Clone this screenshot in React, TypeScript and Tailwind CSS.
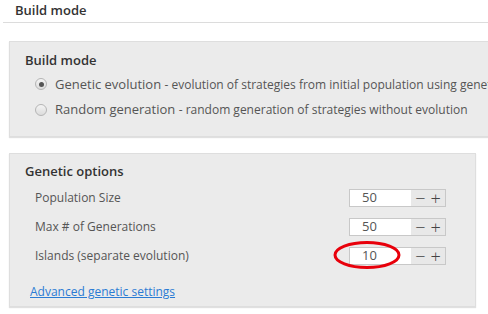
import React from 'react';

const font = { fontFamily: '"Open Sans", "Noto Sans", sans-serif' };

const Stepper = ({ value, circled }: { value: string; circled?: boolean }) => (
  <div className="relative flex h-[18px] w-[97px] border border-[#c8c8c8] bg-[#e8e8e8]">
    <div className="flex w-[61px] items-center bg-white pl-[12px] text-[13px] text-[#555]">{value}</div>
    <div className="flex flex-1 items-center justify-center gap-[5px] text-[18px] font-light leading-none text-[#444]">
      <span>−</span>
      <span>+</span>
    </div>
    {circled && (
      <svg className="pointer-events-none absolute left-[-17px] top-[-9px]" width="70" height="32" viewBox="0 0 70 32">
        <ellipse cx="34" cy="16" rx="32" ry="12.5" fill="none" stroke="#e8000b" strokeWidth="3" />
      </svg>
    )}
  </div>
);

const Row = ({ label, value, circled }: { label: string; value: string; circled?: boolean }) => (
  <div className="flex h-[29px] items-center justify-between pl-[25px] pr-[29px]">
    <span className="text-[12px] text-[#555]">{label}</span>
    <Stepper value={value} circled={circled} />
  </div>
);

const Radio = ({ checked }: { checked?: boolean }) => (
  <span className="flex h-[12px] w-[12px] shrink-0 items-center justify-center rounded-full border border-[#b5b5b5] bg-gradient-to-b from-[#f4f4f4] to-[#dcdcdc]">
    {checked && <span className="h-[5px] w-[5px] rounded-full bg-[#555]" />}
  </span>
);

export default function App() {
  return (
    <div className="h-[314px] w-[488px] overflow-hidden bg-white" style={font}>
      <div className="ml-[3px] flex h-[23px] items-center border-b border-[#dcdcdc] pl-[12px] text-[13px] font-semibold text-[#333]">
        Build mode
      </div>

      <div className="ml-[9px] mr-[-10px] mt-[18px] h-[96px] border border-[#dedede] bg-[#ebebeb] pl-[15px] pt-[9px] shadow-[0_1px_1px_rgba(0,0,0,0.12)]">
        <div className="text-[13px] font-semibold text-[#333]">Build mode</div>
        <div className="mt-[4px] flex flex-col gap-[6px] pl-[10px]">
          <div className="flex items-center gap-[8px] whitespace-nowrap">
            <Radio checked />
            <span className="text-[13px] text-[#555]">
              Genetic evolution <span className="text-[12px]">- evolution of strategies from initial population using genetic algorithms</span>
            </span>
          </div>
          <div className="flex items-center gap-[8px] whitespace-nowrap">
            <Radio />
            <span className="text-[13px] text-[#555]">
              Random generation <span className="text-[12px]">- random generation of strategies without evolution</span>
            </span>
          </div>
        </div>
      </div>

      <div className="ml-[9px] mt-[16px] h-[154px] w-[467px] border border-[#dedede] bg-[#ebebeb] pt-[8px] shadow-[0_1px_1px_rgba(0,0,0,0.12)]">
        <div className="pl-[15px] text-[13px] font-semibold text-[#333]">Genetic options</div>
        <div className="mt-[2px]">
          <Row label="Population Size" value="50" />
          <Row label="Max # of Generations" value="50" />
          <Row label="Islands (separate evolution)" value="10" circled />
        </div>
        <a href="#" className="ml-[20px] mt-[12px] inline-block text-[12px] text-[#2a7bd4] underline">
          Advanced genetic settings
        </a>
      </div>
    </div>
  );
}
